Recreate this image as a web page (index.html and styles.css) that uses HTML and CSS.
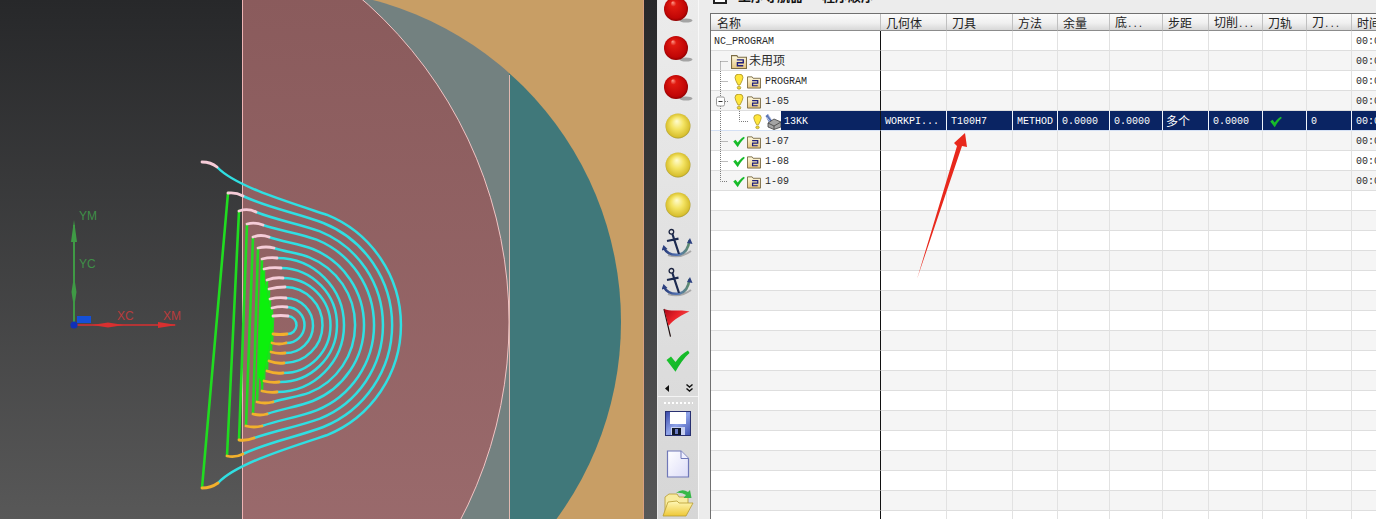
FILE: index.html
```html
<!DOCTYPE html>
<html lang="zh-CN">
<head>
  <meta charset="UTF-8">
  <title>NC Program Order</title>
  <link rel="stylesheet" href="styles.css">
</head>
<body>
  <!-- shared icons -->
  <svg class="defs" width="0" height="0">
    <defs>
      <radialGradient id="gradRed" cx="0.5" cy="0.5" r="0.55" fx="0.36" fy="0.22">
        <stop offset="0" stop-color="#ff9c8c"/>
        <stop offset="0.22" stop-color="#e01a10"/>
        <stop offset="0.8" stop-color="#c00606"/>
        <stop offset="1" stop-color="#7c0000"/>
      </radialGradient>
      <radialGradient id="gradYellow" cx="0.5" cy="0.5" r="0.55" fx="0.45" fy="0.3">
        <stop offset="0" stop-color="#fffcd0"/>
        <stop offset="0.45" stop-color="#f4e464"/>
        <stop offset="0.85" stop-color="#d8c030"/>
        <stop offset="1" stop-color="#80782c"/>
      </radialGradient>
      <linearGradient id="gradArm" x1="0" x2="1" y1="0" y2="0">
        <stop offset="0" stop-color="#263a78"/>
        <stop offset="0.55" stop-color="#5878b8"/>
        <stop offset="1" stop-color="#5c8a68"/>
      </linearGradient>
      <linearGradient id="gradFlag" x1="0" x2="1" y1="0" y2="0.6">
        <stop offset="0" stop-color="#a80818"/>
        <stop offset="0.5" stop-color="#e82028"/>
        <stop offset="1" stop-color="#f05050"/>
      </linearGradient>
      <linearGradient id="gradCheck" x1="0" x2="1" y1="0" y2="1">
        <stop offset="0" stop-color="#20c830"/>
        <stop offset="0.6" stop-color="#14b828"/>
        <stop offset="1" stop-color="#30d858"/>
      </linearGradient>
      <linearGradient id="gradFolder" x1="0" x2="0" y1="0" y2="1">
        <stop offset="0" stop-color="#fffbe4"/>
        <stop offset="1" stop-color="#e4c47c"/>
      </linearGradient>
      <linearGradient id="gradDisk" x1="0" x2="1" y1="0" y2="1">
        <stop offset="0" stop-color="#3848a8"/>
        <stop offset="0.5" stop-color="#90a4e8"/>
        <stop offset="1" stop-color="#3c50b0"/>
      </linearGradient>
      <linearGradient id="gradPage" x1="0" x2="1" y1="0" y2="1">
        <stop offset="0" stop-color="#ffffff"/>
        <stop offset="1" stop-color="#dcdcf8"/>
      </linearGradient>
      <linearGradient id="gradOpen" x1="0" x2="0" y1="0" y2="1">
        <stop offset="0" stop-color="#fff8b8"/>
        <stop offset="1" stop-color="#eec838"/>
      </linearGradient>

      <symbol id="ballRed" viewBox="0 0 32 32">
        <ellipse cx="24" cy="27.5" rx="6.5" ry="2" fill="#a4a4a4"/>
        <circle cx="14" cy="16" r="12" fill="url(#gradRed)"/>
      </symbol>
      <symbol id="ballYellow" viewBox="0 0 32 32">
        <circle cx="16" cy="16" r="12.5" fill="url(#gradYellow)"/>
      </symbol>
      <symbol id="anchor" viewBox="0 0 32 32">
        <path d="M6 27 Q18 31 29 23" stroke="#a8a8a8" stroke-width="2" fill="none"/>
        <path d="M2 20 Q6 28 17.5 26.5 Q26 24.5 27.5 12" stroke="url(#gradArm)" stroke-width="2.6" fill="none"/>
        <path d="M-0.5 22.5 L1.5 17 L5.5 21 Z M25 15 L28 10 L30.5 16 Z" fill="#2c4080"/>
        <circle cx="9.4" cy="3.8" r="2.3" fill="none" stroke="#1c2440" stroke-width="1.3"/>
        <path d="M10.4 6 L17 26 M5 13 L16.5 10.6" stroke="#1c2a50" stroke-width="2.2" fill="none"/>
      </symbol>
      <symbol id="flag" viewBox="0 0 32 32">
        <path d="M2 3 L8.5 30.7" stroke="#201010" stroke-width="1.2"/>
        <path d="M2 3 C10 6 18 3 27.5 5.5 C20 9 12 13 6.5 20 Z" fill="url(#gradFlag)"/>
      </symbol>
      <symbol id="check" viewBox="0 0 32 32">
        <path d="M4.5 15 L9 11.5 L13.5 17 C17 12 21 8 26 5.5 L27.5 8 C22 13 17 20 13.5 26.7 Z" fill="url(#gradCheck)"/>
      </symbol>
      <symbol id="floppy" viewBox="0 0 26 26">
        <rect x="0.5" y="0.5" width="25" height="24" fill="url(#gradDisk)" stroke="#283070"/>
        <rect x="5" y="1" width="16" height="12" fill="#fff"/>
        <rect x="6" y="16" width="14" height="8" fill="#c8d0f0"/>
        <rect x="7" y="17" width="9" height="7" fill="#101828"/>
        <rect x="10" y="18" width="3" height="5" fill="#6878c0"/>
      </symbol>
      <symbol id="page" viewBox="0 0 24 28">
        <path d="M1.5 1 H15 L22.5 8.5 V27 H1.5 Z" fill="url(#gradPage)" stroke="#7078b8" stroke-width="1.2"/>
        <path d="M15 1 V8.5 H22.5" fill="#f0f0ff" stroke="#7078b8"/>
      </symbol>
      <symbol id="open" viewBox="0 0 32 30">
        <path d="M3 27 L3 9 L7 6 L15 6 L17 9 L26 9 L26 16 L3 27 Z" fill="#f8eca0" stroke="#b89c30" stroke-width="0.8"/>
        <path d="M1 28 L6 14 L15 13 L17 15 L31 15 L24 28 Z" fill="url(#gradOpen)" stroke="#b89c30" stroke-width="0.8"/>
        <path d="M14 5 Q20 0 26 4 L28 2 L29.5 10 L21.5 10 L24 7 Q19 4 14 5 Z" fill="#38b848"/>
      </symbol>
      <symbol id="bulb" viewBox="0 0 16 16">
        <path d="M4 3.4 A4 3.3 0 0 1 12 3.4 Q11.8 6 9 11 H7 Q4.2 6 4 3.4 Z" fill="#ffe63c" stroke="#a89028" stroke-width="0.8"/>
        <ellipse cx="8" cy="13.7" rx="1.8" ry="1.5" fill="#f0d830" stroke="#a89028" stroke-width="0.7"/>
      </symbol>
      <symbol id="folder" viewBox="0 0 15 14">
        <path d="M0.5 13.5 V1.5 H5.5 L6.5 3 H14.5 V13.5 Z" fill="url(#gradFolder)" stroke="#7c6c44"/>
        <path d="M5.5 5.5 H11.5 V8.2 H6 V11 H11.5" fill="none" stroke="#20207c" stroke-width="1.3"/>
      </symbol>
      <symbol id="operation" viewBox="0 0 16 16">
        <path d="M0.5 2 L3 0 L7.5 7 L4 8.5 Z" fill="#5a74b4"/>
        <path d="M1.5 3 L6 9 M3.5 1.5 L7 6" stroke="#d8e0f0" stroke-width="0.8"/>
        <path d="M3 9 L9 5 L16 8 V13 L9 15.5 L3 13 Z" fill="#a4a4a4" stroke="#404040" stroke-width="0.8"/>
        <path d="M3 9 L9 12 L16 8 M9 12 V15.5" fill="none" stroke="#404040" stroke-width="0.8"/>
      </symbol>
    </defs>
  </svg>

  <div class="screen">
    <!-- 3D view -->
    <svg class="scene" width="657" height="519" viewBox="0 0 657 519">
      <defs>
        <linearGradient id="gradView" x1="0" x2="0" y1="0" y2="1">
          <stop offset="0" stop-color="#27282a"/>
          <stop offset="1" stop-color="#585858"/>
        </linearGradient>
        <linearGradient id="gradFace" x1="0" x2="0" y1="0" y2="1">
          <stop offset="0" stop-color="#875859"/>
          <stop offset="1" stop-color="#a07072"/>
        </linearGradient>
        <clipPath id="clipLeftPart"><rect x="242" y="0" width="267" height="519"/></clipPath>
        <clipPath id="clipRightPart"><rect x="509" y="0" width="135" height="519"/></clipPath>
      </defs>
      <rect width="657" height="519" fill="url(#gradView)"/>
      <rect x="242" width="402" height="519" fill="#c89e65"/>
      <rect x="643" width="1" height="519" fill="#d8a080"/>
      <circle cx="288" cy="322" r="333" fill="#738180" clip-path="url(#clipLeftPart)"/>
      <circle cx="288" cy="322" r="333" fill="#40787a" clip-path="url(#clipRightPart)"/>
      <circle cx="81" cy="322" r="428" fill="url(#gradFace)" stroke="#f0c4c4" clip-path="url(#clipLeftPart)"/>
      <path d="M242.5 0 V519" stroke="#eeb4b4"/>
      <path d="M509.5 75 V519" stroke="#e0b8b0"/>

      <!-- work coordinate triad -->
      <g class="triad">
        <path d="M74 325 V225" stroke="#3f9a45" stroke-width="2"/>
        <path d="M74 220 L77 242 H71 Z M74 276 L76.5 292 L74 308 L71.5 292 Z" fill="#3f9a45"/>
        <path d="M74 325 H175" stroke="#d83030" stroke-width="1.6"/>
        <path d="M177 325 L158 322 V328 Z M92 325 L108 322.5 L124 325 L108 327.5 Z" fill="#d83030"/>
        <rect x="77" y="316" width="14" height="7" fill="#1450d8"/>
        <circle cx="74" cy="325" r="3.6" fill="#1030b8"/>
        <text class="axis axis-y" x="79" y="220">YM</text>
        <text class="axis axis-y" x="79" y="268">YC</text>
        <text class="axis axis-x" x="117" y="320">XC</text>
        <text class="axis axis-x" x="163" y="320">XM</text>
      </g>

      <!-- tool path: feed moves between passes -->
      <g class="path-feed">
        <path d="M228 193 L202 488"/>
        <path d="M239 211 L227 456"/>
        <path d="M247 224 L239 440"/>
        <path d="M253 237 L246 426"/>
        <path d="M258 248 L253 414"/>
        <path d="M262 259 L257 402"/>
        <path d="M264 269 L262 391"/>
        <path d="M267 280 L264 381"/>
        <path d="M269 289 L267 371"/>
        <path d="M270 299 L269 361"/>
        <path d="M272 308 L271 352"/>
        <path d="M273 316 L272 343"/>
      </g>
      <path d="M262 265 L273 325 L262 385 L258 375 L259 325 Z" fill="#0cf00c"/>

      <!-- tool path: cutting passes -->
      <g class="path-cut">
        <path d="M288 316 A9 9 0 0 1 287 334"/>
        <path d="M287 307 A18 18 0 0 1 286 343"/>
        <path d="M286 298 A27.5 27.5 0 0 1 285 353"/>
        <path d="M285 287 A38 38 0 0 1 284 363"/>
        <path d="M283 278 A47.5 47.5 0 0 1 283 373"/>
        <path d="M281 268 A57 57 0 0 1 279 382"/>
        <path d="M277 258 A67 67 0 0 1 277 392"/>
        <path d="M274 248 C286 252 298 253 309.4 257.3 A73 73 0 0 1 309.4 392.7 C298 397 285 398 273 402"/>
        <path d="M269 237 C283 242 299 243.5 312.8 249 A82 82 0 0 1 312.8 401 C299 406.5 281 409 267 414"/>
        <path d="M263 225 C280 231 299 233 316.5 239.7 A92 92 0 0 1 316.5 410.3 C299 417 279 420 262 426"/>
        <path d="M256 212 C276 220 300 224 319.9 231.4 A101 101 0 0 1 319.9 418.6 C300 426 274 431 254 438"/>
        <path d="M243 196 C268 208 297 213 323.3 223 A110 110 0 0 1 323.3 427 C297 437 268 442 243 454"/>
        <path d="M217 167 C235 186 285 201 326.6 214.7 A119 119 0 0 1 326.6 435.3 C285 449 236 464 218 483"/>
      </g>

      <!-- tool path: engage moves -->
      <g class="path-engage">
        <path d="M202 162 Q211 162 217 167"/>
        <path d="M228 193 Q236 192 243 196"/>
        <path d="M239 211 Q248 208 256 212"/>
        <path d="M247 224 Q255 222 263 225"/>
        <path d="M253 237 Q261 234 269 237"/>
        <path d="M258 248 Q266 246 274 248"/>
        <path d="M262 259 Q270 257 277 258"/>
        <path d="M264 269 Q272 267 281 268"/>
        <path d="M267 280 Q275 277 283 278"/>
        <path d="M269 289 Q277 287 285 287"/>
        <path d="M270 299 Q278 297 286 298"/>
        <path d="M272 308 Q280 306 287 307"/>
        <path d="M273 316 Q281 315 288 316"/>
      </g>
      <!-- tool path: retract moves -->
      <g class="path-retract">
        <path d="M273 334 Q280 335 287 334"/>
        <path d="M272 343 Q279 345 286 343"/>
        <path d="M271 352 Q278 354 285 353"/>
        <path d="M269 361 Q277 364 284 363"/>
        <path d="M267 371 Q275 374 283 373"/>
        <path d="M264 381 Q272 383 279 382"/>
        <path d="M262 391 Q270 393 277 392"/>
        <path d="M257 402 Q265 404 273 402"/>
        <path d="M253 414 Q260 416 267 414"/>
        <path d="M246 426 Q254 428 262 426"/>
        <path d="M239 440 Q247 441 254 438"/>
        <path d="M227 456 Q235 458 243 454"/>
        <path d="M202 488 Q211 488 218 483"/>
      </g>
    </svg>

    <!-- icon toolbar -->
    <div class="toolbar">
      <div class="tool"><svg width="32" height="32"><use href="#ballRed"/></svg></div>
      <div class="tool"><svg width="32" height="32"><use href="#ballRed"/></svg></div>
      <div class="tool"><svg width="32" height="32"><use href="#ballRed"/></svg></div>
      <div class="tool"><svg width="32" height="32"><use href="#ballYellow"/></svg></div>
      <div class="tool"><svg width="32" height="32"><use href="#ballYellow"/></svg></div>
      <div class="tool"><svg width="32" height="32"><use href="#ballYellow"/></svg></div>
      <div class="tool"><svg width="32" height="32"><use href="#anchor"/></svg></div>
      <div class="tool"><svg width="32" height="32"><use href="#anchor"/></svg></div>
      <div class="tool"><svg width="32" height="32"><use href="#flag"/></svg></div>
      <div class="tool"><svg width="32" height="32"><use href="#check"/></svg></div>
      <div class="tool-scroll">
        <svg width="5" height="7" viewBox="0 0 5 7"><path d="M4 0 V7 L0 3.5 Z" fill="#111"/></svg>
        <svg width="7" height="8" viewBox="0 0 7 8"><path d="M0.5 0.5 L3.5 3 L6.5 0.5 M0.5 4.5 L3.5 7 L6.5 4.5" fill="none" stroke="#111" stroke-width="1.4"/></svg>
      </div>
      <div class="tool-grip"></div>
      <div class="tool"><svg width="26" height="26"><use href="#floppy"/></svg></div>
      <div class="tool"><svg width="24" height="28"><use href="#page"/></svg></div>
      <div class="tool"><svg width="32" height="30"><use href="#open"/></svg></div>
    </div>

    <!-- navigator panel -->
    <div class="navigator">
      <div class="nav-title">
        <span class="nav-box"></span>
        <span class="nav-title-text">工序导航器 — 程序顺序</span>
      </div>
      <div class="grid-wrap">
        <table class="grid">
          <colgroup>
            <col class="c-name"><col class="c-geo"><col class="c-tool"><col class="c-method"><col class="c-stock">
            <col class="c-floor"><col class="c-step"><col class="c-cut"><col class="c-path"><col class="c-tn"><col class="c-time">
          </colgroup>
          <thead>
            <tr>
              <th class="head-name">名称</th><th>几何体</th><th>刀具</th><th>方法</th><th>余量</th>
              <th>底<span class="more">...</span></th><th>步距</th><th>切削<span class="more">...</span></th><th>刀轨</th><th>刀<span class="more">...</span></th><th>时间</th>
            </tr>
          </thead>
          <tbody>
            <tr><td class="name"><div class="tree root">NC_PROGRAM</div></td><td></td><td></td><td></td><td></td><td></td><td></td><td></td><td></td><td></td><td>00:00:00</td></tr>
            <tr><td class="name"><div class="tree">
              <svg class="twig" width="17" height="20"><path d="M6.5 10.5 V20 M6.5 10.5 H14"/></svg>
              <svg class="icon-wide" width="16" height="15"><use href="#folder"/></svg><span class="cjk">未用项</span>
            </div></td><td></td><td></td><td></td><td></td><td></td><td></td><td></td><td></td><td></td><td>00:00:00</td></tr>
            <tr><td class="name"><div class="tree">
              <svg class="twig" width="17" height="20"><path d="M6.5 0 V20 M6.5 10.5 H14"/></svg>
              <svg class="icon-state" width="16" height="16"><use href="#bulb"/></svg>
              <svg class="icon-folder" width="14" height="14"><use href="#folder"/></svg>PROGRAM
            </div></td><td></td><td></td><td></td><td></td><td></td><td></td><td></td><td></td><td></td><td>00:00:00</td></tr>
            <tr><td class="name"><div class="tree">
              <svg class="twig" width="17" height="20">
                <path d="M6.5 0 V6 M6.5 15 V20 M11 10.5 H14"/>
                <rect class="twig-box" x="2.5" y="6" width="8" height="9" rx="1.5"/>
                <path class="twig-minus" d="M4.5 10.5 H8.5"/>
              </svg>
              <svg class="icon-state" width="16" height="16"><use href="#bulb"/></svg>
              <svg class="icon-folder" width="14" height="14"><use href="#folder"/></svg>1-05
            </div></td><td></td><td></td><td></td><td></td><td></td><td></td><td></td><td></td><td></td><td>00:00:00</td></tr>
            <tr class="selected"><td class="name"><div class="tree">
              <svg class="twig" width="36" height="20"><path d="M6.5 0 V20 M25.5 0 V10.5 H35"/></svg>
              <svg class="icon-bulb" width="15" height="16"><use href="#bulb"/></svg>
              <svg class="icon-op" width="16" height="16"><use href="#operation"/></svg>
              <span class="sel-label">13KK</span>
            </div></td><td>WORKPI...</td><td>T100H7</td><td>METHOD</td><td>0.0000</td><td>0.0000</td><td class="narrow"><span class="cjk">多个</span></td><td>0.0000</td><td class="mark"><svg width="16" height="16"><use href="#check"/></svg></td><td>0</td><td>00:00:00</td></tr>
            <tr><td class="name"><div class="tree">
              <svg class="twig" width="17" height="20"><path d="M6.5 0 V20 M6.5 10.5 H14"/></svg>
              <svg class="icon-state" width="16" height="16"><use href="#check"/></svg>
              <svg class="icon-folder" width="14" height="14"><use href="#folder"/></svg>1-07
            </div></td><td></td><td></td><td></td><td></td><td></td><td></td><td></td><td></td><td></td><td>00:00:00</td></tr>
            <tr><td class="name"><div class="tree">
              <svg class="twig" width="17" height="20"><path d="M6.5 0 V20 M6.5 10.5 H14"/></svg>
              <svg class="icon-state" width="16" height="16"><use href="#check"/></svg>
              <svg class="icon-folder" width="14" height="14"><use href="#folder"/></svg>1-08
            </div></td><td></td><td></td><td></td><td></td><td></td><td></td><td></td><td></td><td></td><td>00:00:00</td></tr>
            <tr><td class="name"><div class="tree">
              <svg class="twig" width="17" height="20"><path d="M6.5 0 V10.5 H14"/></svg>
              <svg class="icon-state" width="16" height="16"><use href="#check"/></svg>
              <svg class="icon-folder" width="14" height="14"><use href="#folder"/></svg>1-09
            </div></td><td></td><td></td><td></td><td></td><td></td><td></td><td></td><td></td><td></td><td>00:00:00</td></tr>
            <tr><td class="name"></td><td></td><td></td><td></td><td></td><td></td><td></td><td></td><td></td><td></td><td></td></tr>
            <tr><td class="name"></td><td></td><td></td><td></td><td></td><td></td><td></td><td></td><td></td><td></td><td></td></tr>
            <tr><td class="name"></td><td></td><td></td><td></td><td></td><td></td><td></td><td></td><td></td><td></td><td></td></tr>
            <tr><td class="name"></td><td></td><td></td><td></td><td></td><td></td><td></td><td></td><td></td><td></td><td></td></tr>
            <tr><td class="name"></td><td></td><td></td><td></td><td></td><td></td><td></td><td></td><td></td><td></td><td></td></tr>
            <tr><td class="name"></td><td></td><td></td><td></td><td></td><td></td><td></td><td></td><td></td><td></td><td></td></tr>
            <tr><td class="name"></td><td></td><td></td><td></td><td></td><td></td><td></td><td></td><td></td><td></td><td></td></tr>
            <tr><td class="name"></td><td></td><td></td><td></td><td></td><td></td><td></td><td></td><td></td><td></td><td></td></tr>
            <tr><td class="name"></td><td></td><td></td><td></td><td></td><td></td><td></td><td></td><td></td><td></td><td></td></tr>
            <tr><td class="name"></td><td></td><td></td><td></td><td></td><td></td><td></td><td></td><td></td><td></td><td></td></tr>
            <tr><td class="name"></td><td></td><td></td><td></td><td></td><td></td><td></td><td></td><td></td><td></td><td></td></tr>
            <tr><td class="name"></td><td></td><td></td><td></td><td></td><td></td><td></td><td></td><td></td><td></td><td></td></tr>
            <tr><td class="name"></td><td></td><td></td><td></td><td></td><td></td><td></td><td></td><td></td><td></td><td></td></tr>
            <tr><td class="name"></td><td></td><td></td><td></td><td></td><td></td><td></td><td></td><td></td><td></td><td></td></tr>
            <tr><td class="name"></td><td></td><td></td><td></td><td></td><td></td><td></td><td></td><td></td><td></td><td></td></tr>
            <tr><td class="name"></td><td></td><td></td><td></td><td></td><td></td><td></td><td></td><td></td><td></td><td></td></tr>
            <tr><td class="name"></td><td></td><td></td><td></td><td></td><td></td><td></td><td></td><td></td><td></td><td></td></tr>
          </tbody>
        </table>
      </div>
      <!-- annotation arrow drawn over the grid -->
      <svg class="callout" width="60" height="150" viewBox="0 0 60 150">
        <path d="M7 148 L47 15 L44 12 L55 2 L57 16 L52 15 Z" fill="#e8281c"/>
      </svg>
    </div>
  </div>
</body>
</html>
```

FILE: styles.css
```css
body {
  margin: 0;
  height: 519px;
  overflow: hidden;
  background: #e8e8e8;
  font-family: "Liberation Mono", "Noto Sans CJK SC", monospace;
  font-size: 10px;
  color: #2a2a2a;
}

.defs {
  position: absolute;
}

.screen {
  display: flex;
  width: 1376px;
  height: 519px;
  overflow: hidden;
}

/* 3D view */
.scene {
  display: block;
  flex: none;
}

.axis {
  font-family: "Liberation Sans", sans-serif;
  font-size: 12px;
}

.axis-y {
  fill: #3f8f48;
}

.axis-x {
  fill: #b83c3c;
}

.path-feed,
.path-cut,
.path-engage,
.path-retract {
  fill: none;
  stroke-linecap: round;
}

.path-feed {
  stroke: #20dc20;
  stroke-width: 2.6;
}

.path-cut {
  stroke: #30dfe2;
  stroke-width: 2.5;
}

.path-engage {
  stroke: #f6ccd8;
  stroke-width: 2.8;
}

.path-retract {
  stroke: #f2b02c;
  stroke-width: 2.8;
}

/* toolbar */
.toolbar {
  flex: none;
  box-sizing: border-box;
  width: 41px;
  height: 530px;
  margin-top: -11px;
  margin-left: 1px;
  background: linear-gradient(#ececec, #d6d6d6);
  border-right: 1px solid #f8f8f8;
  display: flex;
  flex-direction: column;
}

.tool {
  flex: none;
  height: 39.2px;
  display: flex;
  align-items: center;
  justify-content: center;
}

.tool svg {
  display: block;
}

.tool-scroll {
  flex: none;
  height: 15px;
  display: flex;
  align-items: center;
  justify-content: space-between;
  padding: 0 5px 0 7px;
  border-bottom: 1px solid #f4f4f4;
}

.tool-grip {
  flex: none;
  height: 8px;
  margin: 4px 5px -4px;
  background: radial-gradient(circle, #fff 0, #fff 0.8px, #b0b0b0 1.2px, transparent 1.4px) 0 0 / 4px 4px repeat-x;
}

/* navigator */
.navigator {
  position: relative;
  flex: 1;
  min-width: 0;
  overflow: hidden;
  background: #ececec;
  padding-left: 11px;
}

.nav-title {
  height: 13px;
  overflow: hidden;
  display: flex;
  align-items: flex-end;
  padding-left: 3px;
  gap: 11px;
}

.nav-box {
  flex: none;
  width: 10px;
  height: 10px;
  margin-bottom: 9px;
  border: 2px solid #222;
  background: #fff;
}

.nav-title-text {
  flex: none;
  margin-bottom: 11px;
  font-family: "Noto Sans CJK SC", sans-serif;
  font-size: 13px;
  line-height: 13px;
  font-weight: 700;
  color: #111;
}

.grid-wrap {
  width: 666px;
  overflow: hidden;
  border-top: 1px solid #707070;
  border-left: 1px solid #707070;
  background: #fff;
}

.grid {
  table-layout: fixed;
  border-collapse: separate;
  border-spacing: 0;
  width: 701px;
}

.c-name { width: 170px; }
.c-geo { width: 66px; }
.c-tool { width: 66px; }
.c-method { width: 45px; }
.c-stock { width: 52px; }
.c-floor { width: 53px; }
.c-step { width: 46px; }
.c-cut { width: 54px; }
.c-path { width: 44px; }
.c-tn { width: 45px; }
.c-time { width: 60px; }

th {
  box-sizing: border-box;
  height: 17px;
  padding: 1px 0 0 5px;
  text-align: left;
  font-family: "Noto Sans CJK SC", sans-serif;
  font-size: 12px;
  line-height: 14px;
  font-weight: 400;
  color: #222;
  overflow: hidden;
  white-space: nowrap;
  background: linear-gradient(#fbfbfb, #f0f0f0 55%, #d8d8d8);
  border-right: 1px solid #c0c0c0;
  border-bottom: 1px solid #8c8c8c;
}

th.head-name {
  padding-left: 6px;
}

.more {
  font-family: "Liberation Mono", monospace;
  font-size: 9px;
  line-height: 1;
}

td {
  box-sizing: border-box;
  height: 20px;
  padding: 2px 0 0 4px;
  white-space: nowrap;
  overflow: hidden;
  line-height: 17px;
  border-right: 1px solid #e2e2e2;
  border-bottom: 1px solid #dedede;
  background: #fff;
}

tbody tr:nth-child(even) td {
  background: #f5f5f5;
}

td.name {
  padding: 0;
  border-right: 1px solid #111;
}

.tree {
  box-sizing: border-box;
  display: flex;
  align-items: center;
  height: 19px;
  padding: 2px 0 0 3px;
}

.twig {
  flex: none;
  display: block;
  align-self: flex-start;
  margin-top: -2px;
}

.twig path {
  fill: none;
  stroke: #7c7c7c;
  stroke-dasharray: 1 1;
}

.twig .twig-box {
  fill: #fff;
  stroke: #9a9a9a;
}

.twig .twig-minus {
  stroke: #333;
  stroke-dasharray: none;
}

.icon-wide {
  flex: none;
  margin-right: 2px;
}

.icon-state {
  flex: none;
}

.icon-folder {
  flex: none;
  margin-right: 4px;
}

.icon-bulb {
  flex: none;
}

.icon-op {
  flex: none;
}

.cjk {
  font-size: 12px;
  line-height: 12px;
}

td .cjk {
  vertical-align: -2px;
}

.selected td {
  background: #0a2463;
  color: #fff;
  border-right-color: #f0f4fc;
  border-bottom-color: #d4e0f4;
}

.selected td.name {
  background: #fff;
  border-right-color: #111;
}

.sel-label {
  box-sizing: border-box;
  flex: 1;
  height: 19px;
  margin-top: -2px;
  padding: 2px 0 0 3px;
  line-height: 17px;
  background: #0a2463;
}

td.narrow {
  padding-left: 3px;
}

td.mark {
  padding-left: 5px;
}

.mark svg {
  display: block;
}

.callout {
  position: absolute;
  left: 211px;
  top: 131px;
  pointer-events: none;
}
```
